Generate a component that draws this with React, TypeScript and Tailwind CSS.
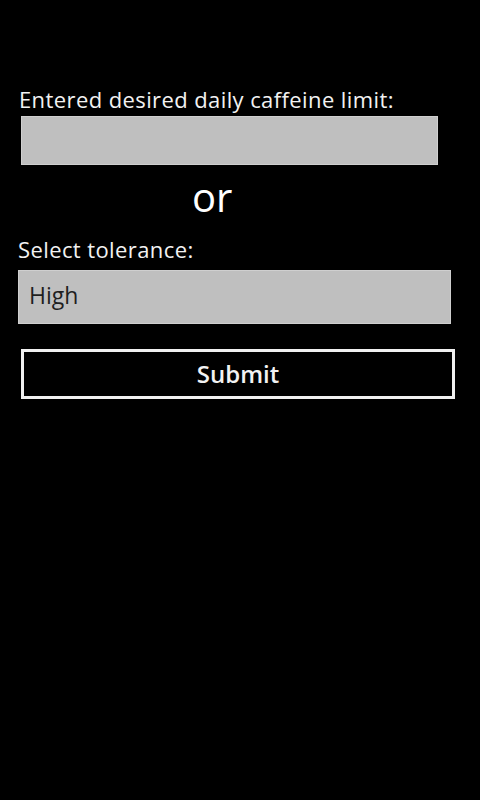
export default function App() {
  return (
    <div className="w-[480px] h-[800px] bg-black flex flex-col text-white" style={{ fontFamily: '"Open Sans", "Noto Sans", sans-serif' }}>
      <div className="pt-[86px] pl-[19px] text-[22px] leading-[26px] tracking-[0.4px] text-[#f2f2f2]">Entered desired daily caffeine limit:</div>
      <div className="mt-[4px] ml-[21px] w-[417px] h-[49px] bg-[#bfbfbf] border border-[#cfcfcf]"></div>
      <div className="mt-[12px] ml-[192px] text-[40px] leading-[40px]">or</div>
      <div className="mt-[19px] pl-[18px] text-[22px] leading-[26px] tracking-[0.4px] text-[#f2f2f2]">Select tolerance:</div>
      <div className="mt-[8px] ml-[18px] w-[433px] h-[54px] bg-[#bfbfbf] border border-[#cfcfcf] flex items-center pl-[10px] pb-[4px] text-[23px] text-[#1f1f1f]">High</div>
      <div className="mt-[25px] ml-[21px] w-[434px] h-[50px] border-[3px] border-[#f0f0f0] flex items-center justify-center text-[24px] font-semibold text-[#f2f2f2]">Submit</div>
    </div>
  );
}
